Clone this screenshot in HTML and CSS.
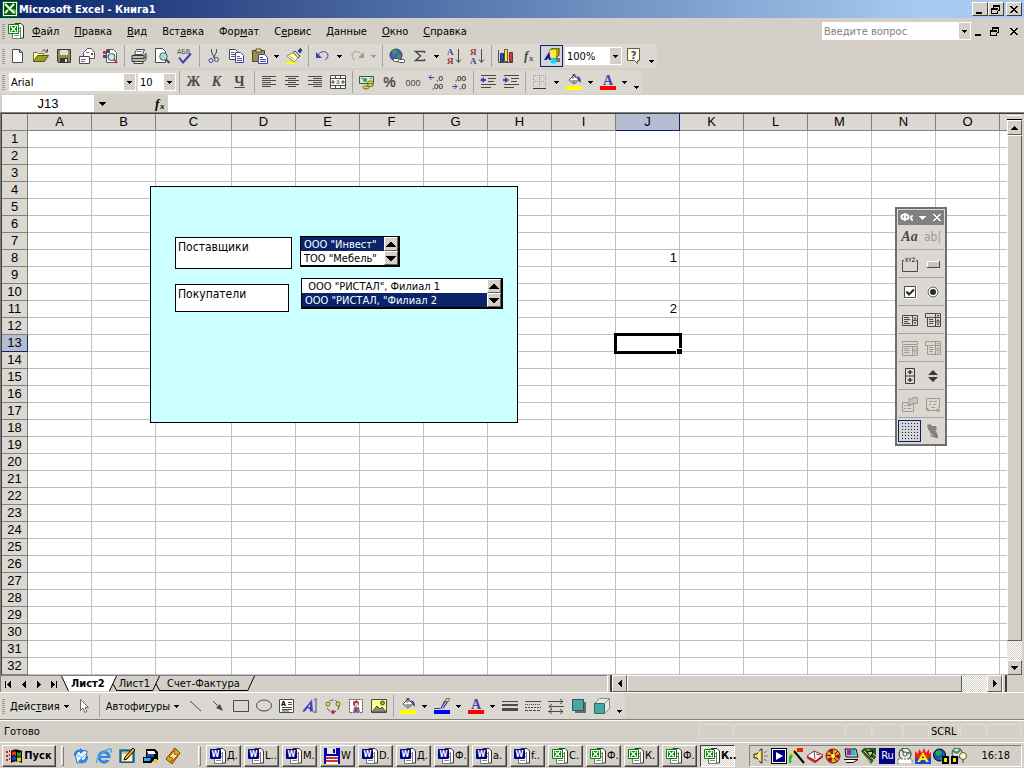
FILE: index.html
```html
<!DOCTYPE html>
<html lang="ru">
<head>
  <meta charset="UTF-8" />
  <meta name="viewport" content="width=device-width, initial-scale=1.0"/>
  <title>Microsoft Excel - Книга1</title>
  <link rel="stylesheet" href="styles.css">
</head>
<body>

  <!-- icon set -->
  <svg class="sprite" aria-hidden="true">
    <symbol id="down" viewBox="0 0 5 3"><path d="M0 0h5v1H0zM1 1h3v1H1zM2 2h1v1H2z" fill="currentColor"/></symbol>
    <symbol id="tri-up" viewBox="0 0 10 5"><path d="M4 0h2v1h1v1h1v1h1v1h1v1H0V4h1V3h1V2h1V1h1z"/></symbol>
    <symbol id="tri-down" viewBox="0 0 10 5"><path d="M4 5h2V4h1V3h1V2h1V1h1V0H0v1h1v1h1v1h1v1h1z"/></symbol>
    <symbol id="sb-up" viewBox="0 0 7 4"><path d="M3 0h1v1h1v1h1v1h1v1H0V3h1V2h1V1h1z"/></symbol>
    <symbol id="sb-down" viewBox="0 0 7 4"><path d="M3 4h1V3h1V2h1V1h1V0H0v1h1v1h1v1h1z"/></symbol>
    <symbol id="sb-left" viewBox="0 0 4 7"><path d="M0 3h1V2h1V1h1V0h1v7H3V6H2V5H1V4H0z"/></symbol>
    <symbol id="sb-right" viewBox="0 0 4 7"><path d="M4 3H3V2H2V1H1V0H0v7h1V6h1V5h1V4h1z"/></symbol>
    <symbol id="sb-first" viewBox="0 0 7 7"><path d="M0 0h1v7H0zM2 3h1V2h1V1h1V0h1v7H5V6H4V5H3V4H2z"/></symbol>
    <symbol id="sb-last" viewBox="0 0 7 7"><path d="M6 0h1v7H6zM5 3H4V2H3V1H2V0H1v7h1V6h1V5h1V4h1z"/></symbol>

    <symbol id="win-min" viewBox="0 0 10 9"><path d="M1 7h6v2H1z"/></symbol>
    <symbol id="win-restore" viewBox="0 0 10 9"><path d="M2 0h7v6H6V5h2V2H3v1H2zM0 3h7v6H0zM1 5v3h5V5z" fill-rule="evenodd"/></symbol>
    <symbol id="win-close" viewBox="0 0 10 9"><path d="M1 1h2v1h1v1h2V2h1V1h2v1H8v1H7v1H6v1h1v1h1v1h1v1H7V7H6V6H4v1H3v1H1V7h1V6h1V5h1V4H3V3H2V2H1z"/></symbol>

    <symbol id="excel" viewBox="0 0 16 16">
      <path d="M0 0h16v16H0z" fill="#007a00"/><path d="M1 1h14v14H1z" fill="#fff"/><path d="M2 2h12v12H2z" fill="#006000"/>
      <path d="M3 3l9 9M12 3L8 7M6 9l-3 3" stroke="#fff" stroke-width="2"/><path d="M11 3l-8 9M9 9h4v4" stroke="#b8e8b8" fill="none"/>
    </symbol>
    <symbol id="excel-doc" viewBox="0 0 16 16">
      <path d="M7 .5h6l2.500 2.500V15H7z" fill="#fff" stroke="#333"/><path d="M4.500 4V15.500H12.500V4" fill="#fff" stroke="#777"/>
      <path d="M6 12.500h5M11 5.500h1M11 8.500h1" stroke="#888"/>
      <path d="M.5 1.500h10v9H.5z" fill="#fff" stroke="#008400"/><path d="M2 3h7v6H2z" fill="#008400"/><path d="M3 3.500l5 5M8 3.500l-5 5" stroke="#fff" stroke-width="1.500"/>
    </symbol>
    <symbol id="word-doc" viewBox="0 0 16 16">
      <path d="M7 .5h6l2.500 2.500V15H7z" fill="#fff" stroke="#333"/><path d="M4.500 4V15.500H12.500V4" fill="#fff" stroke="#777"/>
      <path d="M6 12.500h5M11 5.500h2M11 8.500h2" stroke="#888"/>
      <path d="M.5 1.500h10v9H.5z" fill="#fff" stroke="#000084"/><path d="M1 2h9v8H1z" fill="#000084"/>
      <text x="5.500" y="9" font-size="8" font-weight="bold" fill="#fff" text-anchor="middle">W</text>
    </symbol>

    <symbol id="new" viewBox="0 0 16 16"><path d="M2.500 1.500h7l3 3v10h-10z" fill="#fff" stroke="#4a4a4a"/><path d="M9.500 1.500v3h3" fill="none" stroke="#4a4a4a"/></symbol>
    <symbol id="open" viewBox="0 0 16 16"><path d="M.5 13V4.500h4l1 1h5V8" fill="#ffffa5" stroke="#73733a"/><path d="M.5 13.500l4-6h11l-4 6z" fill="#9c9c29" stroke="#55551c"/><path d="M9 3.500c1-2 4-2 5 0M14.500 1v3h-3" fill="none" stroke="#4a4a4a"/></symbol>
    <symbol id="save" viewBox="0 0 16 16"><path d="M1.500 1.500h13v13h-12l-1-1z" fill="#8c8c42" stroke="#3a3a3a"/><path d="M4 2h8v5H4z" fill="#deded6"/><path d="M4 10h8v4H4z" fill="#3a3a3a"/><path d="M9 11h2v3H9z" fill="#deded6"/></symbol>
    <symbol id="mail" viewBox="0 0 16 16"><path d="M4.500 4.500l4-4h4l3 4v6h-11z" fill="#fff" stroke="#5a5a5a"/><path d="M12 5h2v2h-2z" fill="#c03030"/><path d="M.5 8.500h10v7H.5z" fill="#fff" stroke="#4a4a4a"/><path d="M2 11.500h5M2 13.500h4M7 4.500h3" stroke="#6a6a9a"/></symbol>
    <symbol id="find" viewBox="0 0 16 16"><path d="M4.500 1.500h7l3 3v10h-10z" fill="#fff" stroke="#5a5a5a"/><path d="M1 3h3v3H1z" fill="#c33"/><path d="M5 2h3v3H5z" fill="#4242a5"/><path d="M1 7h4v3H1z" fill="#4242a5"/><path d="M5 6h3v4H5z" fill="#e8e04a"/><circle cx="9.500" cy="9" r="3.500" fill="#bfefef" stroke="#4a4a4a"/><path d="M12 11.500l3 3.500" stroke="#d04040" stroke-width="2"/></symbol>
    <symbol id="print" viewBox="0 0 16 16"><path d="M5.500 1.500h8l-2 5h-8z" fill="#fff" stroke="#4a4a4a"/><path d="M1 7.500h12l2-2v6l-2 2H1z" fill="#bdbdb5" stroke="#3a3a3a"/><path d="M1 10.500h12v-3M13 10.500l2-2" stroke="#3a3a3a" fill="none"/><path d="M3 13.500h9v2H3z" fill="#fff" stroke="#3a3a3a"/><path d="M9 12h3" stroke="#d8d800"/><path d="M6 3.500h5" stroke="#777"/></symbol>
    <symbol id="preview" viewBox="0 0 16 16"><path d="M1.500.5h7l3 3v11h-10z" fill="#fff" stroke="#4a4a4a"/><circle cx="9.500" cy="8.500" r="3.800" fill="#a5dede" stroke="#5a5a5a"/><path d="M12 11.500l3.500 3.500" stroke="#3a5a5a" stroke-width="2"/></symbol>
    <symbol id="spell" viewBox="0 0 16 16"><text x="0" y="6" font-size="7" fill="#4a4a4a">АБВ</text><path d="M2 9.500l4 5 8-9" fill="none" stroke="#4242a5" stroke-width="2"/></symbol>
    <symbol id="cut" viewBox="0 0 16 16"><path d="M5.500 1v3l3 6M10.500 1v3l-3 6" fill="none" stroke="#4a4a4a"/><circle cx="5" cy="12.500" r="2" fill="none" stroke="#4242a5"/><circle cx="10.500" cy="11.500" r="2" fill="none" stroke="#4242a5"/></symbol>
    <symbol id="copy" viewBox="0 0 16 16"><path d="M.5 1.500h6l2 2v8h-8z" fill="#fff" stroke="#4a4a4a"/><path d="M6.500 4.500h5l3 3v7h-8z" fill="#fff" stroke="#4242a5"/><path d="M2 4.500h3M2 6.500h4M2 8.500h4M8 8.500h3M8 10.500h5M8 12.500h5" stroke="#5a5a8a"/></symbol>
    <symbol id="paste" viewBox="0 0 16 16"><path d="M.5 2.500h12v11H.5z" fill="#9c8c4a" stroke="#4a4a2a"/><path d="M4 1h5v3H4z" fill="#efe76b" stroke="#4a4a4a"/><path d="M6.500 6.500h6l3 3v6h-9z" fill="#fff" stroke="#4242a5"/><path d="M8 9.500h3M8 11.500h6M8 13.500h6" stroke="#4242a5"/></symbol>
    <symbol id="brush" viewBox="0 0 16 16"><path d="M12 3l2-2.500 2 1.500-2 3z" fill="#4242a5" stroke="#33337a"/><path d="M7 4.500l2-1.500 5 5-2 2z" fill="#d8d8d0" stroke="#4a4a4a"/><path d="M1 8l6-3.500 5 5.500-4 4z" fill="#ffffb5" stroke="#8c8c4a"/><path d="M2 9l4 4M4 8l4 4" stroke="#b5a542"/><path d="M0 15h9" stroke="#ffff00" stroke-width="2"/></symbol>
    <symbol id="undo" viewBox="0 0 16 16"><path d="M3 7c2-4 9-5 10 0 0 2-1 4-3 5" fill="none" stroke="#4242a5"/><path d="M1 4v6h6z" fill="#4242a5"/></symbol>
    <symbol id="redo" viewBox="0 0 16 16"><path d="M13 7C11 3 4 2 3 7c0 2 1 4 3 5" fill="none" stroke="#9c9c94"/><path d="M15 4v6H9z" fill="#9c9c94"/></symbol>
    <symbol id="link" viewBox="0 0 16 16"><circle cx="7" cy="7" r="6" fill="#4a5ab5" stroke="#3a3a6a"/><path d="M3 3c2-2 5-2 6 0L7 6 4 7zM9 6l3 1-1 4-3-2z" fill="#3a9c5a"/><rect x="4.500" y="10.500" width="6" height="3" rx="1" fill="#fff" stroke="#4a4a4a"/><rect x="9.500" y="11.500" width="6" height="3" rx="1" fill="#fff" stroke="#4a4a4a"/></symbol>
    <symbol id="sum" viewBox="0 0 16 16"><path d="M12.500 5V3.500H3.500l5 4.500-5 4.500h9V11" fill="none" stroke="#4a4a4a" stroke-width="1.500"/></symbol>
    <symbol id="sort-az" viewBox="0 0 16 16"><text x="1" y="7" class="sort-letter" fill="#4242a5">А</text><text x="1" y="16" class="sort-letter" fill="#9c3a3a">Я</text><path d="M12.500 1v13M10 11.500l2.500 3 2.500-3" fill="none" stroke="#4a4a4a"/></symbol>
    <symbol id="sort-za" viewBox="0 0 16 16"><text x="1" y="7" class="sort-letter" fill="#9c3a3a">Я</text><text x="1" y="16" class="sort-letter" fill="#4242a5">А</text><path d="M12.500 1v13M10 11.500l2.500 3 2.500-3" fill="none" stroke="#4a4a4a"/></symbol>
    <symbol id="chart" viewBox="0 0 16 16"><path d="M.5 2v12.500H15" fill="none" stroke="#4a4a4a"/><path d="M2.500 5.500h3v8h-3z" fill="#4242c5" stroke="#2a2a6a"/><path d="M6.500 1.500h3v12h-3z" fill="#ffe642" stroke="#5a5a3a"/><path d="M11.500 4.500h3v9h-3z" fill="#d03a3a" stroke="#6a2a2a"/></symbol>
    <symbol id="fx" viewBox="0 0 16 16"><text x="3" y="12" class="fx-letter" fill="currentColor">f</text><text x="8" y="13" class="fx-small" fill="currentColor">x</text></symbol>
    <symbol id="drawing" viewBox="0 0 16 16"><path d="M6 2l3-2h6v7l-3 3H6z" fill="#b5a500" stroke="#4a4a00"/><path d="M6 2h6v8H6z" fill="#ffe74a"/><path d="M0 12L5 4l2 8H5l-.5-2-2 2z" fill="#1818b5"/><path d="M9 10h7v4H9z" fill="#6a7a7a"/><circle cx="9.500" cy="13" r="2.800" fill="#00e0ff"/></symbol>
    <symbol id="help" viewBox="0 0 16 16"><path d="M1.500.5h12v12h-2v3l-3-3h-7z" fill="#ffffd0" stroke="#5a5a5a"/><text x="7.500" y="11" font-size="11" font-weight="bold" fill="#3a42b5" text-anchor="middle">?</text></symbol>

    <symbol id="al-left" viewBox="0 0 16 16"><path d="M1 2.500h14M1 4.500h9M1 6.500h14M1 8.500h9M1 10.500h14M1 12.500h9" stroke="#4a4a4a"/></symbol>
    <symbol id="al-center" viewBox="0 0 16 16"><path d="M1 2.500h14M4 4.500h8M1 6.500h14M4 8.500h8M1 10.500h14M4 12.500h8" stroke="#4a4a4a"/></symbol>
    <symbol id="al-right" viewBox="0 0 16 16"><path d="M1 2.500h14M6 4.500h9M1 6.500h14M6 8.500h9M1 10.500h14M6 12.500h9" stroke="#4a4a4a"/></symbol>
    <symbol id="merge" viewBox="0 0 16 16"><path d="M.5 1.500h15v13H.5zM.5 4.500h15M.5 11.500h15M5.500 1.500v3M10.500 1.500v3M5.500 11.500v3M10.500 11.500v3" fill="#fff" stroke="#4a4a4a"/><path d="M1 8h4M11 8h4M3 6v4M13 6v4" stroke="#4a4a4a"/><text x="8" y="10" font-size="7" text-anchor="middle" fill="#4a4a4a">a</text></symbol>
    <symbol id="money" viewBox="0 0 16 16"><path d="M.5 2.500h14v7H.5z" fill="#d8e8d8" stroke="#3a5a3a"/><circle cx="6" cy="6" r="2" fill="#4a8c5a"/><path d="M2 4.500h2M11 4.500h2" stroke="#4a8c5a"/><ellipse cx="11.500" cy="8.500" rx="3" ry="1.500" fill="#e8d84a" stroke="#6a6a2a"/><ellipse cx="11.500" cy="11" rx="3" ry="1.500" fill="#e8d84a" stroke="#6a6a2a"/><ellipse cx="7" cy="13.500" rx="3" ry="1.500" fill="#e8d84a" stroke="#6a6a2a"/></symbol>
    <symbol id="thousands" viewBox="0 0 16 16"><text x="8" y="12" class="num-letter" text-anchor="middle" fill="#4a4a4a">000</text></symbol>
    <symbol id="dec-more" viewBox="0 0 16 16"><text x="15" y="7" class="digit">,0</text><text x="15" y="15" class="digit">,00</text><path d="M1 3.500h5M3.500 1L1 3.500 3.500 6" fill="none" stroke="#4242a5"/></symbol>
    <symbol id="dec-less" viewBox="0 0 16 16"><text x="15" y="7" class="digit">,00</text><text x="15" y="15" class="digit">,0</text><path d="M1 12.500h5M3.500 10L6 12.500 3.500 15" fill="none" stroke="#4242a5"/></symbol>
    <symbol id="outdent" viewBox="0 0 16 16"><path d="M1 1.500h15M8 4.500h8M8 7.500h6M1 10.500h15M1 13.500h10" stroke="#4a4a4a"/><path d="M1 6h5" stroke="#4242a5" stroke-width="2"/><path d="M4 3v6L0 6z" fill="#4242a5"/></symbol>
    <symbol id="indent" viewBox="0 0 16 16"><path d="M1 1.500h15M8 4.500h8M8 7.500h6M1 10.500h15M1 13.500h10" stroke="#4a4a4a"/><path d="M0 6h5" stroke="#4242a5" stroke-width="2"/><path d="M2 3v6l4-3z" fill="#4242a5"/></symbol>
    <symbol id="border" viewBox="0 0 16 16"><path d="M1.500 1v12M7.500 1v12M13.500 1v12M1 1.500h13M1 7.500h13" stroke="#9c9c94" stroke-dasharray="1 1"/><path d="M1 14.500h13" stroke="#3a3a3a"/></symbol>
    <symbol id="fill" viewBox="0 0 16 16"><path d="M3 6l5-5 5 5-5 4z" fill="#fff" stroke="#4a4a4a"/><path d="M5 6h7l-4 4z" fill="#9c9c94"/><path d="M7 5V.5h2V4" fill="none" stroke="#4a4a4a"/><path d="M11 2c3 1 4 3 4 7l-3-3z" fill="#4242a5"/><path d="M0 12h16v4H0z" fill="#ffff00"/></symbol>
    <symbol id="font-color" viewBox="0 0 16 16"><text x="8" y="11" class="color-letter" text-anchor="middle">A</text><path d="M0 12h16v4H0z" fill="#ff0000"/></symbol>
    <symbol id="line-color" viewBox="0 0 16 16"><path d="M13 0l3 1-2 3-3-1z" fill="#efe74a" stroke="#6a6a2a"/><path d="M10 3l4 1-4 6-4 1z" fill="#4242a5"/><path d="M12 4l-4 6" stroke="#c5d0e8"/><path d="M0 10.500h6" stroke="#4242a5"/><path d="M0 12h16v4H0z" fill="#0000ff"/></symbol>

    <symbol id="pointer" viewBox="0 0 16 16"><path d="M4.500 1.500v11l2.500-2.500 2 4.500 2-1-2-4h3.500z" fill="#fff" stroke="#6a6a6a"/></symbol>
    <symbol id="line" viewBox="0 0 16 16"><path d="M3 3l11 10" stroke="#4a4a4a"/></symbol>
    <symbol id="arrow" viewBox="0 0 16 16"><path d="M3 3l7 7" stroke="#4a4a4a"/><path d="M13 13L6 10l4-4z" fill="#4a4a4a"/></symbol>
    <symbol id="rect" viewBox="0 0 16 16"><path d="M.5 2.500h15v11H.5z" fill="none" stroke="#4a4a4a"/></symbol>
    <symbol id="oval" viewBox="0 0 16 16"><ellipse cx="8" cy="7.500" rx="7.500" ry="5.500" fill="none" stroke="#4a4a4a"/></symbol>
    <symbol id="textbox" viewBox="0 0 16 16"><path d="M.5 1.500h14v13H.5z" fill="#fff" stroke="#4a4a4a"/><path d="M9 4.500h4M9 6.500h4M3 9.500h10M3 11.500h10M3 13h7" stroke="#4a4a4a"/><text x="2" y="8" font-size="7" font-weight="bold">A</text></symbol>
    <symbol id="wordart" viewBox="0 0 16 16"><path d="M0 13.500L10 1.500l1 12H8l-.5-3H5l-2 3z" fill="#4242c5"/><path d="M6 9h2V6z" fill="#d8d8ff"/><path d="M12 2l2-1v13h-3" fill="none" stroke="#8c8cad" stroke-width="2"/></symbol>
    <symbol id="diagram" viewBox="0 0 16 16"><circle cx="8" cy="8" r="6" fill="none" stroke="#4a4aa5" stroke-dasharray="4 2"/><circle cx="3" cy="6" r="2" fill="#ffe642" stroke="#6a6a2a"/><circle cx="13" cy="6" r="2" fill="#ffe642" stroke="#6a6a2a"/><circle cx="8" cy="14" r="2" fill="#a53a6a"/></symbol>
    <symbol id="clipart" viewBox="0 0 16 16"><path d="M1.500 1.500h13v13h-13z" fill="#fff" stroke="#4a4a4a" stroke-dasharray="2 1"/><circle cx="8" cy="5.500" r="3" fill="#a53a4a"/><path d="M7 5h3v3H7z" fill="#f0c8a0"/><path d="M5 14l1-5h5l1 5z" fill="#8c6ab5"/><path d="M8 10v4" stroke="#a53a4a" stroke-width="2"/></symbol>
    <symbol id="picture" viewBox="0 0 16 16"><path d="M.5 1.500h15v13H.5z" fill="#ffff8c" stroke="#4a4a4a"/><circle cx="11.500" cy="5" r="2" fill="#b5a542" stroke="#4a4a4a"/><path d="M1 14l5-6 3 3 2-2 4 5z" fill="#8c8c84" stroke="#4a4a4a"/></symbol>
    <symbol id="line-style" viewBox="0 0 16 16"><path d="M0 3.500h16" stroke="#4a4a4a"/><path d="M0 7h16" stroke="#4a4a4a" stroke-width="2"/><path d="M0 11.500h16" stroke="#4a4a4a" stroke-width="3"/></symbol>
    <symbol id="dash-style" viewBox="0 0 16 16"><path d="M0 3.500h16" stroke="#4a4a4a"/><path d="M0 6.500h16" stroke="#4a4a4a" stroke-dasharray="1 1"/><path d="M0 9.500h16" stroke="#4a4a4a" stroke-dasharray="2 1"/><path d="M0 12.500h16" stroke="#4a4a4a" stroke-dasharray="3 1"/></symbol>
    <symbol id="arrow-style" viewBox="0 0 16 16"><path d="M0 3.500h15M12 1l3 2.500L12 6M1 8.500h15M4 6L1 8.500 4 11M0 13.500h15M12 11l3 2.500-3 2.500M4 11l-3 2.500L4 16" fill="none" stroke="#4a4a4a"/></symbol>
    <symbol id="shadow" viewBox="0 0 16 16"><path d="M4 4h11v11H4z" fill="#6a6a6a"/><path d="M1.500 1.500h11v11h-11z" fill="#4aa5a5" stroke="#2a5a5a"/></symbol>
    <symbol id="cube" viewBox="0 0 16 16"><path d="M.5 5.500l5-5h10v10l-5 5z" fill="#e8e8e0" stroke="#8c8c84"/><path d="M.5 5.500h10v10H.5z" fill="#4aa5a5" stroke="#2a6a6a"/><path d="M10.500 5.500l5-5" stroke="#8c8c84"/></symbol>

    <symbol id="f-group" viewBox="0 0 18 16"><path d="M3 4.500H1.500v11h15v-11H15" fill="none" stroke="#4a4a4a"/><text x="9" y="6" font-size="6" text-anchor="middle">XYZ</text></symbol>
    <symbol id="f-button" viewBox="0 0 16 16"><path d="M2 5h13v7H2z" fill="#4a4a4a"/><path d="M2 5h12v6H2z" fill="#fff"/><path d="M3 6h11v5H3z" fill="#c8c4bc"/></symbol>
    <symbol id="f-check" viewBox="0 0 16 16"><path d="M2 2h13v13H2z" fill="#fff"/><path d="M2.500 2.500h11v11h-11z" fill="#fff" stroke="#4a4a4a"/><path d="M4.500 7.500l2.500 3 5-5" fill="none" stroke="#2a2a2a" stroke-width="2"/></symbol>
    <symbol id="f-radio" viewBox="0 0 16 16"><circle cx="8" cy="8" r="6" fill="#fff"/><circle cx="8" cy="8" r="5" fill="#fff" stroke="#4a4a4a"/><circle cx="8" cy="8" r="3" fill="#2a2a2a"/></symbol>
    <symbol id="f-list" viewBox="0 0 16 16"><path d="M.5 3.500h15v10H.5zM10.500 3.500v10M10.500 8.500h5" fill="none" stroke="currentColor"/><path d="M2 5.500h5M2 7.500h6M2 9.500h4M2 11.500h6" stroke="currentColor"/><path d="M11.500 7.500L13 5l1.500 2.500zM11.500 10L13 12l1.500-2z" fill="currentColor"/></symbol>
    <symbol id="f-combo" viewBox="0 0 16 16"><path d="M.5 1.500h15v4H.5zM2.500 5.500h13v9h-13zM10.500 1.500v13M10.500 10h5" fill="none" stroke="currentColor"/><path d="M4 7.500h4M4 9.500h5M4 11.500h4" stroke="currentColor"/><path d="M11.500 3h3L13 5zM11.500 9L13 7l1.500 2zM11.500 11.500L13 13.500l1.500-2z" fill="currentColor"/></symbol>
    <symbol id="f-listtext" viewBox="0 0 16 16"><path d="M.5 1.500h15v3H.5zM.5 6.500h15v9H.5zM10.500 6.500v9M10.500 11h5" fill="none" stroke="currentColor"/><path d="M2 8.500h5M2 10.500h6M2 12.500h5" stroke="currentColor"/><path d="M11.500 10L13 8l1.500 2zM11.500 12.500L13 14.500l1.500-2z" fill="currentColor"/></symbol>
    <symbol id="f-scroll" viewBox="0 0 16 16"><path d="M3.500.5h9v15h-9zM3.500 8h9" fill="none" stroke="#3a3a3a"/><path d="M5 4.500L8 2l3 2.500H9V6H7V4.500zM5 11.500L8 14l3-2.500H9V10H7v1.500z" fill="#3a3a3a"/></symbol>
    <symbol id="f-spin" viewBox="0 0 16 16"><path d="M3 7l5-5 5 5zM3 9l5 5 5-5z" fill="#3a3a3a"/></symbol>
    <symbol id="f-props" viewBox="0 0 16 16"><path d="M.5 6.500h11v9H.5z" fill="none" stroke="currentColor"/><path d="M2 9.500h2M5 9.500h4M2 12.500h2M5 12.500h4" stroke="currentColor"/><path d="M6 3h5V1.500h4.500v6H11L8 9 5 7l3-1z" fill="#c8c4bc" stroke="currentColor"/></symbol>
    <symbol id="f-code" viewBox="0 0 16 16"><path d="M1.500 2.500h13v9h-1v3h-9l-3-3z" fill="none" stroke="currentColor"/><path d="M4 5.500h4M9 5.500h3M4 8.500h2M8 8.500h3M6 11.500h4" stroke="currentColor"/><path d="M1 12l3 3M11 14.500h4" stroke="currentColor" stroke-width="2"/></symbol>
    <symbol id="f-grid" viewBox="0 0 16 16"><path d="M0 .5h16M0 3.500h16M0 6.500h16M0 9.500h16M0 12.500h16M0 15.500h16" stroke="#222" stroke-dasharray="1 2"/></symbol>
    <symbol id="f-run" viewBox="0 0 16 16"><path d="M2 2l3-1 2 2 4 0 1 3-2 2 3 4v3h-3l-5-6-2-3z" fill="#84847c"/><path d="M6 8.500h5v5H6zM8 4l3 3" fill="none" stroke="#84847c"/></symbol>

    <symbol id="flag" viewBox="0 0 16 16"><path d="M0 3h2v2H0zM0 7h2v2H0zM0 11h2v2H0zM3 2h1v2H3zM3 6h1v2H3zM3 10h1v2H3z" fill="#d02020"/><path d="M5 3c3-2 6-2 11 0v12c-5-2-8-2-11 0z"/><path d="M6 4c1-1 3-1 4 0v4c-1-1-3-1-4 0z" fill="#f03010"/><path d="M11 4c1 1 3 1 4 0v4c-1 1-3 1-4 0z" fill="#20a020"/><path d="M6 9c1-1 3-1 4 0v4c-1-1-3-1-4 0z" fill="#1840d0"/><path d="M11 9c1 1 3 1 4 0v4c-1 1-3 1-4 0z" fill="#f0d010"/></symbol>
    <symbol id="outlook" viewBox="0 0 16 16"><path d="M2 5l4-3 8 1-1 11-9 1z" fill="#e8f4ff" stroke="#2a7ac0"/><path d="M4 7l5 3 4-4" fill="none" stroke="#70a8e0"/><path d="M1 8c-1-4 3-7 6-6V0l4 3-4 3V4C4 4 4 6 3 8zM15 8c1 4-3 7-6 6v2l-4-3 4-3v2c3 0 3-2 4-4z" fill="#2a88e0"/></symbol>
    <symbol id="ie" viewBox="0 0 16 16"><circle cx="8" cy="9" r="5" fill="none" stroke="#2a88e0" stroke-width="3"/><path d="M4 9h10" stroke="#2a88e0" stroke-width="2"/><path d="M10 10h6v2h-5z" fill="#d4d0c8"/><path d="M1 15C-1 11 8 1 15 1c1 1 0 3-1 4" fill="none" stroke="#50a8f0" stroke-width="1.500"/></symbol>
    <symbol id="desktop" viewBox="0 0 16 16"><path d="M0 1h16v14H0z" fill="#1898c8"/><path d="M2 3h12v11H2z" fill="#fff8d0" stroke="#222"/><path d="M2 5h12" stroke="#888"/><path d="M14 0l2 2-8 9-3 1 1-3z" fill="#f0b020" stroke="#000"/></symbol>
    <symbol id="phone" viewBox="0 0 16 16"><path d="M4 1h9l3 3v8h-4l-3 3H1V9h3z"/><path d="M5 3h7l2 3H6z" fill="#fff"/><path d="M2 10h7l-1 3H2z" fill="#20b8e8"/><path d="M5 6h7v3H5z" fill="#1848d0"/><path d="M12 11h3v4h-3z" fill="#e8d800"/></symbol>
    <symbol id="winamp" viewBox="0 0 16 16"><path d="M10 0l5 5-8 11-6-5z" fill="#f0a020" stroke="#684000"/><path d="M10 2L4 9l4 1-3 5 8-8-4-1z" fill="#fff0a0" stroke="#a06000"/></symbol>
    <symbol id="floppy" viewBox="0 0 16 16"><path d="M0 0h16v16H0z" fill="#0000b0"/><path d="M3 0h9v6H3z" fill="#e8e8e8"/><path d="M9 1h2v4H9z" fill="#0000b0"/><path d="M2 8h12v8H2z" fill="#fff"/><path d="M2 10h12M2 13h12" stroke="#d03030" stroke-width="2"/></symbol>

    <symbol id="speaker" viewBox="0 0 16 16"><path d="M1 6h3l4-5h1v14H8l-4-5H1z" fill="#f0e040" stroke="#222"/><path d="M6 3v10" stroke="#fff"/><path d="M11 5l3-2M11 8h4M11 11l3 2" stroke="#777"/></symbol>
    <symbol id="play" viewBox="0 0 16 16"><path d="M0 0h16v16H0z"/><path d="M1 1h14v14H1z" fill="#fff"/><path d="M2 2h12v12H2z" fill="#000084"/><path d="M5 4v8l7-4z" fill="#fff"/></symbol>
    <symbol id="gauge" viewBox="0 0 16 16"><path d="M1 15C0 11 1 9 3 7" fill="none" stroke="#18c818" stroke-width="3"/><path d="M3 6l5-4" stroke="#f8e000" stroke-width="3"/><path d="M8 2h6" stroke="#f02020" stroke-width="4"/><path d="M5 3l10 12" stroke="#000" stroke-width="2"/></symbol>
    <symbol id="book" viewBox="0 0 16 16"><path d="M0 8l7-5 9 4-7 6z" fill="#fff" stroke="#a02020"/><path d="M0 9l8 5 8-6" fill="none" stroke="#c02020" stroke-width="2"/><path d="M7 3l1 8M9 6l4 1" stroke="#555"/></symbol>
    <symbol id="palette" viewBox="0 0 16 16"><circle cx="8" cy="8" r="7" fill="#f0a818" stroke="#5a2000"/><path d="M8 8L3 2l5-1zM8 8l7-2-1 5zM8 8l-2 7-4-4z" fill="#a01818"/><path d="M8 8l5-5M8 8l4 6M8 8L1 7" stroke="#401000"/><circle cx="8" cy="8" r="2" fill="#fff080"/></symbol>
    <symbol id="display" viewBox="0 0 16 16"><path d="M2 1h11l2 8H3z" fill="#c8c8c8" stroke="#111"/><path d="M4 2h4v5H4z" fill="#a018c8"/><path d="M8 2h4l1 5H8z" fill="#18c8a0"/><path d="M4 11.500h11l-5 3h-7M1 11.500h3" fill="#fff" stroke="#111"/></symbol>
    <symbol id="chip" viewBox="0 0 16 16"><path d="M0 3l3-3h12v9l-5 7z" fill="#285828"/><path d="M3 3l10 9M6 1l9 7M1 6l9 8" stroke="#e8e060"/><path d="M6 4l6-1-2 6z" fill="#b8e0b8" stroke="#000"/></symbol>
    <symbol id="disc" viewBox="0 0 16 16"><circle cx="8" cy="6" r="6" fill="#e8e8e8" stroke="#222"/><path d="M8 6L4 1M8 6l6-2" stroke="#3a8a4a" stroke-width="2"/><circle cx="8" cy="6" r="2" fill="#fff" stroke="#555"/><path d="M1 11h14v5H1z" fill="#fff" stroke="#777" stroke-dasharray="2 1"/></symbol>
    <symbol id="flame" viewBox="0 0 16 16"><path d="M0 10V3l3 3 1-5 3 4 2-5 2 5 3-4v5l2-2v6z" fill="#f02010"/><path d="M0 10h16v6H0z" fill="#1848d0"/><path d="M8 4l6 10h-3l-1-2H6l-1 2H2z" fill="#f8e820"/><path d="M8 8l1 2H7z"/></symbol>
    <symbol id="globe-lock" viewBox="0 0 16 16"><circle cx="6.500" cy="7" r="6" fill="#1858b0" stroke="#000"/><path d="M3 3l4-1 2 3-3 3-3-1zM7 9l3 1-2 3z" fill="#20a858"/><path d="M9 8h7v8H9z"/><path d="M11 10h3v4h-3z" fill="#f0e020"/></symbol>
    <symbol id="bulb-lock" viewBox="0 0 16 16"><circle cx="6" cy="5" r="5" fill="#e0e0d8" stroke="#333"/><path d="M6 5l4-4M6 5L2 3" stroke="#389848" stroke-width="2"/><circle cx="12" cy="8" r="3.500" fill="#fff8b0" stroke="#555"/><path d="M11 12h2v3h-2z" fill="#888"/><path d="M0 8h7v8H0z"/><path d="M2 10h3v4H2z" fill="#f0e020"/></symbol>
  </svg>

  <header class="titlebar">
    <svg class="icon"><use href="#excel"/></svg>
    <h1>Microsoft Excel - Книга1</h1>
    <div class="win-buttons">
      <button aria-label="Свернуть"><svg class="glyph"><use href="#win-min"/></svg></button>
      <button aria-label="Восстановить"><svg class="glyph"><use href="#win-restore"/></svg></button>
      <button class="close" aria-label="Закрыть"><svg class="glyph"><use href="#win-close"/></svg></button>
    </div>
  </header>

  <nav class="menubar">
    <span class="grip"></span>
    <svg class="icon"><use href="#excel-doc"/></svg>
    <button><u>Ф</u>айл</button>
    <button><u>П</u>равка</button>
    <button><u>В</u>ид</button>
    <button>Вст<u>а</u>вка</button>
    <button>Фор<u>м</u>ат</button>
    <button>С<u>е</u>рвис</button>
    <button><u>Д</u>анные</button>
    <button><u>О</u>кно</button>
    <button><u>С</u>правка</button>
    <div class="combo ask">
      <input type="text" placeholder="Введите вопрос" aria-label="Введите вопрос">
      <span class="combo-arrow"><svg class="down"><use href="#down"/></svg></span>
    </div>
    <div class="doc-buttons">
      <button aria-label="Свернуть книгу"><svg class="glyph"><use href="#win-min"/></svg></button>
      <button aria-label="Восстановить книгу"><svg class="glyph"><use href="#win-restore"/></svg></button>
      <button class="close" aria-label="Закрыть книгу"><svg class="glyph"><use href="#win-close"/></svg></button>
    </div>
  </nav>

  <div class="toolbar-row">
    <div class="toolbar">
      <span class="grip"></span>
      <button class="tool" aria-label="Создать"><svg class="icon"><use href="#new"/></svg></button>
      <button class="tool" aria-label="Открыть"><svg class="icon"><use href="#open"/></svg></button>
      <button class="tool" aria-label="Сохранить"><svg class="icon"><use href="#save"/></svg></button>
      <button class="tool" aria-label="Сообщение"><svg class="icon"><use href="#mail"/></svg></button>
      <button class="tool" aria-label="Найти"><svg class="icon"><use href="#find"/></svg></button>
      <span class="sep"></span>
      <button class="tool" aria-label="Печать"><svg class="icon"><use href="#print"/></svg></button>
      <button class="tool" aria-label="Просмотр"><svg class="icon"><use href="#preview"/></svg></button>
      <button class="tool" aria-label="Орфография"><svg class="icon"><use href="#spell"/></svg></button>
      <span class="sep"></span>
      <button class="tool" aria-label="Вырезать"><svg class="icon"><use href="#cut"/></svg></button>
      <button class="tool" aria-label="Копировать"><svg class="icon"><use href="#copy"/></svg></button>
      <button class="tool" aria-label="Вставить"><svg class="icon"><use href="#paste"/></svg></button>
      <button class="drop" aria-label="Параметры вставки"><svg class="down"><use href="#down"/></svg></button>
      <button class="tool" aria-label="Формат по образцу"><svg class="icon"><use href="#brush"/></svg></button>
      <span class="sep"></span>
      <button class="tool" aria-label="Отменить"><svg class="icon"><use href="#undo"/></svg></button>
      <button class="drop" aria-label="Список отмены"><svg class="down"><use href="#down"/></svg></button>
      <button class="tool" aria-label="Вернуть"><svg class="icon"><use href="#redo"/></svg></button>
      <button class="drop off" aria-label="Список возврата"><svg class="down"><use href="#down"/></svg></button>
      <span class="sep"></span>
      <button class="tool" aria-label="Гиперссылка"><svg class="icon"><use href="#link"/></svg></button>
      <button class="tool" aria-label="Автосумма"><svg class="icon"><use href="#sum"/></svg></button>
      <button class="drop" aria-label="Функции"><svg class="down"><use href="#down"/></svg></button>
      <button class="tool" aria-label="По возрастанию"><svg class="icon"><use href="#sort-az"/></svg></button>
      <button class="tool" aria-label="По убыванию"><svg class="icon"><use href="#sort-za"/></svg></button>
      <span class="sep"></span>
      <button class="tool" aria-label="Диаграмма"><svg class="icon"><use href="#chart"/></svg></button>
      <button class="tool" aria-label="Вставка функции"><svg class="icon"><use href="#fx"/></svg></button>
      <button class="tool pressed" aria-label="Рисование"><svg class="icon"><use href="#drawing"/></svg></button>
      <div class="combo zoom">
        <select aria-label="Масштаб"><option>100%</option></select>
        <span class="combo-arrow"><svg class="down"><use href="#down"/></svg></span>
      </div>
      <button class="tool" aria-label="Справка"><svg class="icon"><use href="#help"/></svg></button>
      <button class="more" aria-label="Параметры панели"><svg class="down"><use href="#down"/></svg></button>
    </div>
  </div>

  <div class="toolbar-row format-row">
    <div class="toolbar">
      <span class="grip"></span>
      <div class="combo font">
        <select aria-label="Шрифт"><option>Arial</option></select>
        <span class="combo-arrow"><svg class="down"><use href="#down"/></svg></span>
      </div>
      <div class="combo size">
        <select aria-label="Размер"><option>10</option></select>
        <span class="combo-arrow"><svg class="down"><use href="#down"/></svg></span>
      </div>
      <span class="sep"></span>
      <button class="tool letter">Ж</button>
      <button class="tool letter italic">К</button>
      <button class="tool letter under">Ч</button>
      <span class="sep"></span>
      <button class="tool" aria-label="По левому краю"><svg class="icon"><use href="#al-left"/></svg></button>
      <button class="tool" aria-label="По центру"><svg class="icon"><use href="#al-center"/></svg></button>
      <button class="tool" aria-label="По правому краю"><svg class="icon"><use href="#al-right"/></svg></button>
      <button class="tool" aria-label="Объединить"><svg class="icon"><use href="#merge"/></svg></button>
      <span class="sep"></span>
      <button class="tool" aria-label="Денежный формат"><svg class="icon"><use href="#money"/></svg></button>
      <button class="tool percent">%</button>
      <button class="tool" aria-label="Разделители"><svg class="icon"><use href="#thousands"/></svg></button>
      <button class="tool" aria-label="Увеличить разрядность"><svg class="icon"><use href="#dec-more"/></svg></button>
      <button class="tool" aria-label="Уменьшить разрядность"><svg class="icon"><use href="#dec-less"/></svg></button>
      <span class="sep"></span>
      <button class="tool" aria-label="Уменьшить отступ"><svg class="icon"><use href="#outdent"/></svg></button>
      <button class="tool" aria-label="Увеличить отступ"><svg class="icon"><use href="#indent"/></svg></button>
      <span class="sep"></span>
      <button class="tool" aria-label="Границы"><svg class="icon"><use href="#border"/></svg></button>
      <button class="drop" aria-label="Виды границ"><svg class="down"><use href="#down"/></svg></button>
      <button class="tool" aria-label="Цвет заливки"><svg class="icon"><use href="#fill"/></svg></button>
      <button class="drop" aria-label="Цвета заливки"><svg class="down"><use href="#down"/></svg></button>
      <button class="tool" aria-label="Цвет шрифта"><svg class="icon"><use href="#font-color"/></svg></button>
      <button class="drop" aria-label="Цвета шрифта"><svg class="down"><use href="#down"/></svg></button>
      <button class="more" aria-label="Параметры панели"><svg class="down"><use href="#down"/></svg></button>
    </div>
  </div>

  <div class="formula-bar">
    <input class="name-box" type="text" value="J13" aria-label="Имя">
    <button class="name-drop" aria-label="Список имен"><svg class="down"><use href="#sb-down"/></svg></button>
    <button class="fx-button" aria-label="Вставка функции"><svg class="icon"><use href="#fx"/></svg></button>
    <input class="formula" type="text" aria-label="Строка формул">
  </div>

  <main class="sheet">
    <div class="grid">
      <table id="cells"></table>

      <div class="panel">
        <div class="caption caption-sellers" id="sellers">Поставщики</div>
        <div class="listbox list-sellers">
          <select size="2" aria-labelledby="sellers">
            <option selected>ООО "Инвест"</option>
            <option>ТОО "Мебель"</option>
          </select>
          <div class="spin">
            <button aria-label="Вверх"><svg class="tri"><use href="#tri-up"/></svg></button>
            <button aria-label="Вниз"><svg class="tri"><use href="#tri-down"/></svg></button>
          </div>
        </div>
        <div class="caption caption-buyers" id="buyers">Покупатели</div>
        <div class="listbox list-buyers">
          <select size="2" aria-labelledby="buyers">
            <option>&nbsp;ООО "РИСТАЛ", Филиал 1</option>
            <option selected>ООО "РИСТАЛ, "Филиал 2</option>
          </select>
          <div class="spin">
            <button aria-label="Вверх"><svg class="tri"><use href="#tri-up"/></svg></button>
            <button aria-label="Вниз"><svg class="tri"><use href="#tri-down"/></svg></button>
          </div>
        </div>
      </div>

      <div class="forms">
        <div class="forms-title">
          <span>Фо</span>
          <svg class="down"><use href="#sb-down"/></svg>
          <button aria-label="Закрыть панель"><svg class="glyph"><use href="#win-close"/></svg></button>
        </div>
        <div class="forms-row first">
          <button class="tool aa">Aa</button>
          <button class="tool ab">ab|</button>
        </div>
        <div class="forms-row">
          <button class="tool" aria-label="Рамка"><svg class="icon wide"><use href="#f-group"/></svg></button>
          <button class="tool" aria-label="Кнопка"><svg class="icon"><use href="#f-button"/></svg></button>
        </div>
        <div class="forms-row">
          <button class="tool" aria-label="Флажок"><svg class="icon"><use href="#f-check"/></svg></button>
          <button class="tool" aria-label="Переключатель"><svg class="icon"><use href="#f-radio"/></svg></button>
        </div>
        <div class="forms-row">
          <button class="tool" aria-label="Список"><svg class="icon"><use href="#f-list"/></svg></button>
          <button class="tool" aria-label="Поле со списком"><svg class="icon"><use href="#f-combo"/></svg></button>
        </div>
        <div class="forms-row off">
          <button class="tool" aria-label="Текстовое поле списка"><svg class="icon"><use href="#f-listtext"/></svg></button>
          <button class="tool" aria-label="Поле с раскрывающимся списком"><svg class="icon"><use href="#f-combo"/></svg></button>
        </div>
        <div class="forms-row">
          <button class="tool" aria-label="Полоса прокрутки"><svg class="icon"><use href="#f-scroll"/></svg></button>
          <button class="tool" aria-label="Счетчик"><svg class="icon"><use href="#f-spin"/></svg></button>
        </div>
        <div class="forms-row off">
          <button class="tool" aria-label="Свойства"><svg class="icon"><use href="#f-props"/></svg></button>
          <button class="tool" aria-label="Текст программы"><svg class="icon"><use href="#f-code"/></svg></button>
        </div>
        <div class="forms-row off">
          <button class="tool pressed" aria-label="Сетка"><svg class="icon"><use href="#f-grid"/></svg></button>
          <button class="tool" aria-label="Выполнить"><svg class="icon"><use href="#f-run"/></svg></button>
        </div>
      </div>
    </div>

    <div class="vscroll">
      <span class="split"></span>
      <button aria-label="Вверх"><svg class="sb-v"><use href="#sb-up"/></svg></button>
      <span class="thumb"></span>
      <span class="track"></span>
      <button aria-label="Вниз"><svg class="sb-v"><use href="#sb-down"/></svg></button>
    </div>
  </main>

  <div class="tabs-row">
    <div class="tabs">
      <button class="tab-nav" aria-label="Первый лист"><svg class="nav-wide"><use href="#sb-first"/></svg></button>
      <button class="tab-nav" aria-label="Предыдущий лист"><svg class="sb-h"><use href="#sb-left"/></svg></button>
      <button class="tab-nav" aria-label="Следующий лист"><svg class="sb-h"><use href="#sb-right"/></svg></button>
      <button class="tab-nav" aria-label="Последний лист"><svg class="nav-wide"><use href="#sb-last"/></svg></button>
      <svg class="slant" viewBox="0 0 8 16"><path d="M0 0h8v16z" fill="#fff"/><path d="M.5 0l7 15" stroke="#000"/></svg>
      <button class="tab active">Лист2</button>
      <svg class="slant" viewBox="0 0 8 16"><path d="M0 0h7L0 15z" fill="#fff"/><path d="M7.500 0L.5 15M4 8l4 7" stroke="#000"/></svg>
      <button class="tab">Лист1</button>
      <svg class="slant" viewBox="0 0 8 16"><path d="M7.500 0L.5 15M4 8l4 7" stroke="#000"/></svg>
      <button class="tab last">Счет-Фактура</button>
      <svg class="slant" viewBox="0 0 8 16"><path d="M7.500 0L.5 15" stroke="#000"/></svg>
    </div>
    <div class="hscroll">
      <span class="split"></span>
      <button aria-label="Влево"><svg class="sb-h"><use href="#sb-left"/></svg></button>
      <span class="thumb"></span>
      <span class="track"></span>
      <button aria-label="Вправо"><svg class="sb-h"><use href="#sb-right"/></svg></button>
      <span class="split"></span>
    </div>
  </div>

  <div class="toolbar-row drawbar">
    <div class="toolbar">
      <span class="grip"></span>
      <button class="menu-tool"><span>Дейс<u>т</u>вия</span><svg class="down"><use href="#down"/></svg></button>
      <button class="tool" aria-label="Выбор объектов"><svg class="icon"><use href="#pointer"/></svg></button>
      <span class="sep"></span>
      <button class="menu-tool"><span>Автофи<u>г</u>уры</span><svg class="down"><use href="#down"/></svg></button>
      <button class="tool" aria-label="Линия"><svg class="icon"><use href="#line"/></svg></button>
      <button class="tool" aria-label="Стрелка"><svg class="icon"><use href="#arrow"/></svg></button>
      <button class="tool" aria-label="Прямоугольник"><svg class="icon"><use href="#rect"/></svg></button>
      <button class="tool" aria-label="Овал"><svg class="icon"><use href="#oval"/></svg></button>
      <button class="tool" aria-label="Надпись"><svg class="icon"><use href="#textbox"/></svg></button>
      <button class="tool" aria-label="WordArt"><svg class="icon"><use href="#wordart"/></svg></button>
      <button class="tool" aria-label="Организационная диаграмма"><svg class="icon"><use href="#diagram"/></svg></button>
      <button class="tool" aria-label="Картинка"><svg class="icon"><use href="#clipart"/></svg></button>
      <button class="tool" aria-label="Рисунок"><svg class="icon"><use href="#picture"/></svg></button>
      <span class="sep"></span>
      <button class="tool" aria-label="Заливка"><svg class="icon"><use href="#fill"/></svg></button>
      <button class="drop" aria-label="Цвета заливки"><svg class="down"><use href="#down"/></svg></button>
      <button class="tool" aria-label="Цвет линий"><svg class="icon"><use href="#line-color"/></svg></button>
      <button class="drop" aria-label="Цвета линий"><svg class="down"><use href="#down"/></svg></button>
      <button class="tool" aria-label="Цвет шрифта"><svg class="icon"><use href="#font-color"/></svg></button>
      <button class="drop" aria-label="Цвета шрифта"><svg class="down"><use href="#down"/></svg></button>
      <button class="tool" aria-label="Тип линии"><svg class="icon"><use href="#line-style"/></svg></button>
      <button class="tool" aria-label="Тип штриха"><svg class="icon"><use href="#dash-style"/></svg></button>
      <button class="tool" aria-label="Вид стрелки"><svg class="icon"><use href="#arrow-style"/></svg></button>
      <button class="tool" aria-label="Тень"><svg class="icon"><use href="#shadow"/></svg></button>
      <button class="tool" aria-label="Объем"><svg class="icon"><use href="#cube"/></svg></button>
      <button class="more" aria-label="Параметры панели"><svg class="down"><use href="#down"/></svg></button>
    </div>
  </div>

  <div class="statusbar">
    <span class="status-text">Готово</span>
    <span class="cell w34"></span>
    <span class="cell w112"></span>
    <span class="cell"></span>
    <span class="cell w30"></span>
    <span class="cell"></span>
    <span class="cell w30">SCRL</span>
    <span class="cell"></span>
    <span class="cell w34"></span>
  </div>

  <footer class="taskbar">
    <button class="start"><svg class="icon"><use href="#flag"/></svg>Пуск</button>
    <span class="bar-grip"></span>
    <div class="quick">
      <button aria-label="Outlook"><svg class="icon"><use href="#outlook"/></svg></button>
      <button aria-label="Internet Explorer"><svg class="icon"><use href="#ie"/></svg></button>
      <button aria-label="Рабочий стол"><svg class="icon"><use href="#desktop"/></svg></button>
      <button aria-label="Связь"><svg class="icon"><use href="#phone"/></svg></button>
      <button aria-label="Winamp"><svg class="icon"><use href="#winamp"/></svg></button>
    </div>
    <span class="bar-grip"></span>
    <div class="tasks">
      <button><svg class="icon"><use href="#word-doc"/></svg>Д.</button>
      <button><svg class="icon"><use href="#word-doc"/></svg>L..</button>
      <button><svg class="icon"><use href="#word-doc"/></svg>M.</button>
      <button><svg class="icon"><use href="#floppy"/></svg>W</button>
      <button><svg class="icon"><use href="#word-doc"/></svg>D.</button>
      <button><svg class="icon"><use href="#word-doc"/></svg>Д.</button>
      <button><svg class="icon"><use href="#word-doc"/></svg>Ф.</button>
      <button><svg class="icon"><use href="#word-doc"/></svg>a.</button>
      <button><svg class="icon"><use href="#word-doc"/></svg>f..</button>
      <button><svg class="icon"><use href="#excel-doc"/></svg>С.</button>
      <button><svg class="icon"><use href="#excel-doc"/></svg>Ф.</button>
      <button><svg class="icon"><use href="#excel-doc"/></svg>К.</button>
      <button><svg class="icon"><use href="#excel-doc"/></svg>Ф.</button>
      <button class="current"><svg class="icon"><use href="#excel-doc"/></svg>К..</button>
    </div>
    <div class="tray">
      <svg class="icon"><use href="#speaker"/></svg>
      <svg class="icon"><use href="#play"/></svg>
      <svg class="icon"><use href="#gauge"/></svg>
      <svg class="icon"><use href="#book"/></svg>
      <svg class="icon"><use href="#palette"/></svg>
      <svg class="icon"><use href="#display"/></svg>
      <svg class="icon"><use href="#chip"/></svg>
      <span class="lang">Ru</span>
      <svg class="icon"><use href="#disc"/></svg>
      <svg class="icon"><use href="#flame"/></svg>
      <svg class="icon"><use href="#globe-lock"/></svg>
      <svg class="icon"><use href="#bulb-lock"/></svg>
      <span class="clock">16:18</span>
    </div>
  </footer>

  <script src="script.js"></script>
</body>
</html>
```
FILE: styles.css
```css
* {
  box-sizing: border-box;
}

body {
  display: flex;
  flex-direction: column;
  height: 100vh;
  margin: 0;
  overflow: hidden;
  font: 11px "DejaVu Sans Condensed", "DejaVu Sans", sans-serif;
  color: #000;
  background-color: #d4d0c8;
}

button,
input,
select {
  margin: 0;
  padding: 0;
  border: none;
  border-radius: 0;
  outline: none;
  font: inherit;
  color: inherit;
  background: none;
}

button {
  display: flex;
  align-items: center;
  justify-content: center;
  flex-shrink: 0;
  white-space: nowrap;
}

svg {
  flex-shrink: 0;
  display: block;
}

.sprite {
  display: none;
}

.icon {
  width: 16px;
  height: 16px;
}

.icon.wide {
  width: 18px;
}

.glyph {
  width: 10px;
  height: 9px;
}

.down {
  width: 5px;
  height: 3px;
}

.sb-v {
  width: 7px;
  height: 4px;
}

.sb-h {
  width: 4px;
  height: 7px;
}

.nav-wide {
  width: 7px;
  height: 7px;
}

.tri {
  width: 10px;
  height: 5px;
}

.sort-letter {
  font: bold 9px "Liberation Serif", serif;
}

.fx-letter {
  font: italic bold 13px "Liberation Serif", serif;
}

.fx-small {
  font: italic bold 9px "Liberation Serif", serif;
}

.color-letter {
  font: bold 14px "Liberation Serif", serif;
  fill: #4242a5;
}

.num-letter {
  font: 9px "Liberation Sans", sans-serif;
}

.digit {
  font: 8px "Liberation Sans", sans-serif;
  text-anchor: end;
}

/* title bar */
.titlebar {
  display: flex;
  align-items: center;
  height: 18px;
  flex-shrink: 0;
  padding: 0 2px;
  color: #fff;
  background: linear-gradient(to right, #0a246a, #a6caf0 90%);
}

.titlebar h1 {
  flex: 1;
  margin: 0 0 0 1px;
  font-size: 11px;
}

.win-buttons {
  display: flex;
  color: #000;
}

.win-buttons button {
  width: 16px;
  height: 14px;
  background-color: #d4d0c8;
  border: 1px solid;
  border-color: #fff #404040 #404040 #fff;
}

.win-buttons .close {
  margin-left: 2px;
}

/* menu */
.menubar {
  display: flex;
  align-items: center;
  height: 26px;
  flex-shrink: 0;
  padding-left: 2px;
}

.menubar > .icon {
  margin: 0 1px 0 2px;
}

.menubar > button {
  height: 20px;
  padding: 0 8px 0 7px;
}

.grip {
  width: 3px;
  height: 15px;
  margin-right: 1px;
  flex-shrink: 0;
  background: repeating-linear-gradient(#9c9a94 0 1px, transparent 1px 2px);
}

.combo {
  display: flex;
  height: 18px;
  flex-shrink: 0;
  background-color: #fff;
}

.combo input,
.combo select {
  flex: 1;
  min-width: 0;
  padding-left: 2px;
  appearance: none;
}

.combo input::placeholder {
  color: #808080;
}

.combo-arrow {
  display: flex;
  align-items: center;
  justify-content: center;
  width: 11px;
  margin: 1px;
  background-color: #d4d0c8;
  pointer-events: none;
}

.ask {
  width: 149px;
  margin-left: auto;
}

.doc-buttons {
  display: flex;
  gap: 6px;
  margin: 0 5px 0 3px;
}

.doc-buttons .close {
  margin-left: 3px;
}

/* toolbars */
.toolbar-row {
  display: flex;
  height: 26px;
  flex-shrink: 0;
}

.format-row {
  height: 25px;
}

.toolbar {
  display: flex;
  align-items: center;
  height: 24px;
  padding-left: 2px;
  border-radius: 0 3px 3px 0;
  background-color: #dbd8d1;
}

.tool {
  width: 23px;
  height: 22px;
  color: #4a4a4a;
}

.tool.pressed {
  background-color: #d4d5d8;
  border: 1px solid #0a246a;
}

.drop {
  width: 11px;
  height: 22px;
}

.drop.off {
  color: #9c9c94;
}

.more {
  width: 12px;
  height: 22px;
  align-items: flex-end;
  padding-bottom: 4px;
}

.sep {
  width: 1px;
  height: 22px;
  margin: 0 2px 0 3px;
  flex-shrink: 0;
  background-color: #a6a6a6;
}

.zoom {
  width: 57px;
  margin-left: 2px;
}

.font {
  width: 127px;
  margin: 0 2px 0 3px;
}

.size {
  width: 38px;
}

.letter {
  font: bold 14px "Liberation Serif", serif;
}

.letter.italic {
  font-style: italic;
}

.letter.under {
  text-decoration: underline;
}

.percent {
  font: bold 14px "Liberation Sans", Arial, sans-serif;
}

/* formula bar */
.formula-bar {
  display: flex;
  height: 17px;
  flex-shrink: 0;
}

.name-box {
  width: 92px;
  margin-left: 2px;
  text-align: center;
  font: 13px "Liberation Sans", Arial, sans-serif;
  background-color: #fff;
}

.name-drop {
  width: 16px;
}

.name-drop .down {
  width: 7px;
  height: 4px;
}

.fx-button {
  width: 58px;
  padding-left: 42px;
}

.formula {
  flex: 1;
  background-color: #fff;
}

/* sheet */
.sheet {
  display: flex;
  flex: 1;
  min-height: 0;
  border-top: 1px solid #808080;
  border-left: 1px solid #808080;
}

.grid {
  position: relative;
  flex: 1;
  overflow: hidden;
  border-top: 1px solid #404040;
  border-left: 1px solid #404040;
  background-color: #fff;
}

table {
  width: 1062px;
  table-layout: fixed;
  border-spacing: 0;
  font: 13px/16px "Liberation Sans", Arial, sans-serif;
}

th,
td {
  height: 17px;
  padding: 0;
  border: solid #c0c0c0;
  border-width: 0 1px 1px 0;
}

th {
  font-weight: normal;
  text-align: center;
  background-color: #dbd8d1;
  border-color: #808080;
}

th.current {
  background-color: #b6bdd2;
  border-color: #0a246a;
}

td {
  padding-right: 2px;
  text-align: right;
}

.col-head {
  width: 26px;
}

.col-wide {
  width: 76px;
}

.selected {
  position: relative;
  outline: 3px solid #000;
  outline-offset: -1px;
}

.selected::after {
  content: "";
  position: absolute;
  right: -3px;
  bottom: -3px;
  width: 5px;
  height: 5px;
  background-color: #000;
  border: solid #fff;
  border-width: 1px 0 0 1px;
}

/* drawing placed over the cells */
.panel {
  position: absolute;
  left: 148px;
  top: 72px;
  width: 368px;
  height: 237px;
  background-color: #ccffff;
  border: 1px solid #000;
}

.caption,
.listbox {
  position: absolute;
  border: 1px solid #000;
  background-color: #fff;
}

.caption {
  padding: 2px;
  font-size: 12px;
}

.caption-sellers {
  left: 24px;
  top: 50px;
  width: 117px;
  height: 32px;
}

.caption-buyers {
  left: 24px;
  top: 97px;
  width: 114px;
  height: 28px;
}

.listbox {
  display: flex;
  height: 31px;
  border-width: 1px 2px 2px 1px;
}

.list-sellers {
  left: 149px;
  top: 49px;
  width: 100px;
}

.list-buyers {
  left: 150px;
  top: 91px;
  width: 202px;
}

.listbox select {
  flex: 1;
  min-width: 0;
  height: 28px;
  overflow: hidden;
}

.listbox option {
  height: 14px;
  min-height: 14px;
  padding: 1px 3px 0;
  line-height: 14px;
}

.listbox option:checked {
  color: #fff;
  -webkit-text-fill-color: #fff;
  background: #0a246a linear-gradient(#0a246a, #0a246a);
}

.spin {
  display: flex;
  flex-direction: column;
  width: 14px;
}

.spin button {
  flex: 1;
}

.spin button,
.vscroll button,
.vscroll .thumb,
.hscroll button,
.hscroll .thumb {
  background-color: #d4d0c8;
  border: 1px solid;
  border-color: #fff #606060 #606060 #fff;
}

/* floating toolbar */
.forms {
  position: absolute;
  right: 60px;
  top: 93px;
  width: 52px;
  border: 2px solid #6f6f6f;
  padding: 1px;
  background-color: #dbd8d1;
}

.forms-title {
  display: flex;
  align-items: center;
  justify-content: space-between;
  height: 15px;
  padding: 0 2px;
  color: #fff;
  font-weight: bold;
  background-color: #808080;
}

.forms-title span {
  width: 13px;
  overflow: hidden;
}

.forms-title .down {
  width: 7px;
  height: 4px;
}

.forms-title svg {
  fill: #fff;
}

.forms-row {
  display: flex;
  height: 28px;
  align-items: center;
  border-bottom: 1px solid #a6a6a6;
}

.forms-row.first,
.forms-row:last-child {
  height: 25px;
}

.forms-row:last-child {
  border-bottom: none;
}

.forms-row.off .tool {
  color: #9c9c94;
}

.forms .aa {
  font: italic bold 14px "Liberation Serif", serif;
}

.forms .ab {
  font-size: 12px;
  color: #9c9c94;
}

/* scroll bars */
.vscroll {
  display: flex;
  flex-direction: column;
  width: 17px;
  border-top: 1px solid #404040;
  padding: 1px 2px 0 0;
}

.vscroll .split {
  height: 5px;
  border-top: 1px solid #fff;
  border-bottom: 1px solid #000;
}

.vscroll button {
  height: 15px;
}

.vscroll .thumb {
  flex: 1;
}

.track {
  background: repeating-conic-gradient(#fff 0 25%, #d4d0c8 0 50%) 0 0 / 2px 2px;
}

.vscroll .track {
  height: 19px;
}

.tabs-row {
  display: flex;
  height: 17px;
  flex-shrink: 0;
  border-left: 1px solid #808080;
}

.tabs {
  display: flex;
  flex: 1;
  border-top: 1px solid #808080;
}

.tab-nav {
  width: 15px;
}

.slant {
  width: 8px;
  height: 16px;
}

.tab {
  height: 15px;
  padding: 0 2px;
  border-bottom: 1px solid #000;
}

.tab.active {
  padding: 0 4px 0 2px;
  font-weight: bold;
  background-color: #fff;
  border-bottom: none;
}

.tab.last {
  padding: 0 7px;
}

.hscroll {
  display: flex;
  width: 417px;
  padding-right: 17px;
}

.hscroll button {
  width: 15px;
}

.hscroll .split {
  width: 5px;
  border-left: 1px solid #fff;
  border-right: 2px solid #404040;
}

.hscroll .thumb {
  flex: 1;
}

.hscroll .track {
  width: 25px;
}

/* drawing toolbar */
.drawbar {
  height: 28px;
  border-top: 1px solid #fff;
  border-bottom: 1px solid #808080;
}

.drawbar .toolbar {
  height: 26px;
}

.menu-tool {
  height: 22px;
  padding: 0 4px;
  gap: 4px;
}

/* status bar */
.statusbar {
  display: flex;
  align-items: center;
  gap: 1px;
  height: 22px;
  flex-shrink: 0;
  padding: 0 3px 0 4px;
  border-top: 1px solid #fff;
}

.status-text {
  flex: 1;
}

.cell {
  width: 26px;
  height: 15px;
  border: 1px solid #e0ddd6;
}

.w30 {
  width: 29px;
}

.w34 {
  width: 34px;
}

.w112 {
  width: 111px;
}

/* task bar */
.taskbar {
  display: flex;
  align-items: center;
  height: 26px;
  flex-shrink: 0;
  padding: 0 2px;
  border-top: 1px solid #fff;
}

.start,
.tasks button {
  height: 22px;
  border: 1px solid;
  border-color: #fff #404040 #404040 #fff;
  box-shadow: inset -1px -1px #808080;
}

.start {
  width: 54px;
  gap: 2px;
  font-weight: bold;
}

.bar-grip {
  width: 3px;
  height: 20px;
  margin: 0 5px;
  border: 1px solid;
  border-color: #fff #808080 #808080 #fff;
}

.quick {
  display: flex;
  gap: 7px;
  margin-right: 12px;
  padding-left: 4px;
}

.tasks {
  display: flex;
  flex: 1;
  gap: 3px;
}

.tasks button {
  width: 35px;
  justify-content: flex-start;
  padding-left: 3px;
  gap: 1px;
}

.tasks .current {
  font-weight: bold;
  border-color: #404040 #fff #fff #404040;
  box-shadow: none;
  background: repeating-conic-gradient(#fff 0 25%, #d4d0c8 0 50%) 0 0 / 2px 2px;
}

.tray {
  display: flex;
  align-items: center;
  gap: 2px;
  height: 22px;
  padding: 0 11px 0 3px;
  border: 1px solid;
  border-color: #808080 #fff #fff #808080;
}

.lang {
  width: 16px;
  height: 16px;
  line-height: 16px;
  text-align: center;
  color: #fff;
  background-color: #000084;
}

.clock {
  margin-left: 12px;
}
```
FILE: script.js
```js
const columns = "ABCDEFGHIJKLMNOP".split("");
const rowCount = 32;
const values = { J8: "1", J11: "2" };
const current = { column: "J", row: 13 };

const table = document.getElementById("cells");

// column letters
let html = '<tr><th class="col-head"></th>';
columns.forEach(letter => {
  const classes = [];
  if (letter === "C") classes.push("col-wide");
  if (letter === current.column) classes.push("current");
  html += `<th class="${classes.join(" ")}">${letter}</th>`;
});
html += "</tr>";

// numbered rows
for (let row = 1; row <= rowCount; row++) {
  html += `<tr><th class="${row === current.row ? "current" : ""}">${row}</th>`;
  columns.forEach(letter => {
    const selected = letter === current.column && row === current.row;
    html += `<td class="${selected ? "selected" : ""}">${values[letter + row] || ""}</td>`;
  });
  html += "</tr>";
}

table.innerHTML = html;
```
